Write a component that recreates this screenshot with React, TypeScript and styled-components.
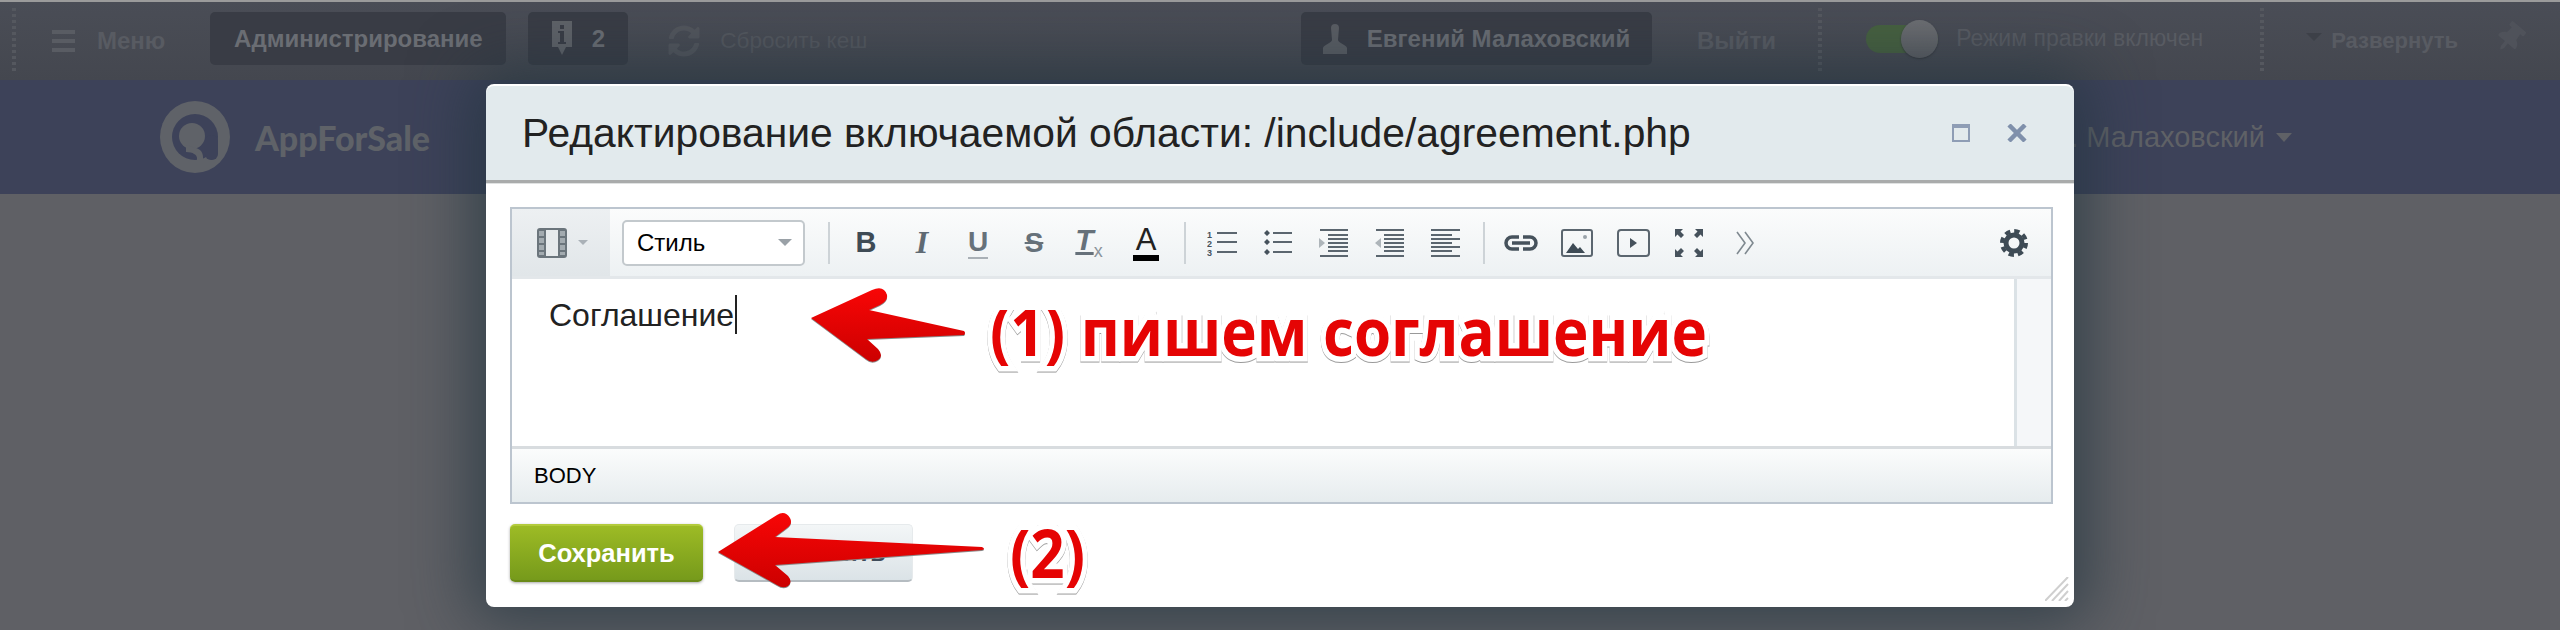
import styled, { createGlobalStyle } from 'styled-components'
import { FaSyncAlt, FaThumbtack } from 'react-icons/fa'

const GlobalStyle = createGlobalStyle`
  html, body {
    margin: 0;
    width: 2560px;
    height: 630px;
    overflow: hidden;
    background: #5f6065;
    font-family: 'Liberation Sans', Arial, sans-serif;
  }
`

const Page = styled.div`
  position: relative;
  width: 2560px;
  height: 630px;
  overflow: hidden;
`

const TopStrip = styled.div`
  height: 2px;
  background: #9b9b9b;
`

const Panel = styled.div`
  height: 78px;
  display: flex;
  align-items: center;
  justify-content: space-between;
  background: linear-gradient(#4a4d56, #44474f);
`

const PanelGroup = styled.div<{ $pr?: number }>`
  display: flex;
  align-items: center;
  padding-right: ${(p) => p.$pr || 0}px;
`

const Grip = styled.div<{ $ml: number }>`
  width: 4px;
  height: 66px;
  margin-left: ${(p) => p.$ml}px;
  background: repeating-linear-gradient(#55585f 0 3px, transparent 3px 6px);
`

const PanelButton = styled.div<{ $w: number; $ml: number }>`
  width: ${(p) => p.$w}px;
  height: 53px;
  margin-left: ${(p) => p.$ml}px;
  margin-top: -5px;
  display: flex;
  align-items: center;
  justify-content: center;
  gap: 20px;
  border-radius: 5px;
  background: #393c45;
  color: #6a6d73;
  font-size: 24px;
  font-weight: bold;
  white-space: nowrap;
`

const PanelText = styled.span<{ $ml: number; $size: number; $bold?: boolean; $color?: string; $up?: number }>`
  margin-left: ${(p) => p.$ml}px;
  margin-top: ${(p) => p.$up || 0}px;
  font-size: ${(p) => p.$size}px;
  font-weight: ${(p) => (p.$bold ? 'bold' : 'normal')};
  color: ${(p) => p.$color || '#585b62'};
  white-space: nowrap;
`

const PanelIcon = styled.span<{ $ml: number; $color?: string; $size?: number; $up?: number }>`
  display: flex;
  margin-left: ${(p) => p.$ml}px;
  margin-top: ${(p) => p.$up || 0}px;
  color: ${(p) => p.$color || '#595c63'};
  font-size: ${(p) => p.$size || 24}px;
`

const Toggle = styled.div`
  position: relative;
  width: 72px;
  height: 28px;
  margin-left: 44px;
  margin-top: -4px;
  border-radius: 14px;
  background: #46603f;
`

const ToggleKnob = styled.div`
  position: absolute;
  right: 0;
  top: -5px;
  width: 37px;
  height: 38px;
  border-radius: 50%;
  background: linear-gradient(#6c6e72, #5b5d62);
  box-shadow: 0 1px 2px #33353b;
`

const SiteHeader = styled.header`
  height: 114px;
  display: flex;
  align-items: center;
  justify-content: space-between;
  background: #3d4259;
`

const Logo = styled.div`
  display: flex;
  align-items: center;
  gap: 25px;
  margin-left: 160px;
`

const LogoText = styled.span`
  font-family: Lato, sans-serif;
  font-weight: 900;
  font-size: 34px;
  color: #5f6268;
`

const HeaderUser = styled.div`
  display: flex;
  align-items: center;
  gap: 11px;
  margin-right: 268px;
  font-size: 29px;
  color: #5f6166;
`

const HeaderCaret = styled.span`
  width: 0;
  height: 0;
  border-left: 8px solid transparent;
  border-right: 8px solid transparent;
  border-top: 9px solid #5f6166;
`

const Dialog = styled.div`
  position: absolute;
  left: 486px;
  top: 84px;
  width: 1588px;
  height: 523px;
  display: flex;
  flex-direction: column;
  box-sizing: border-box;
  border-radius: 8px;
  background: #fff;
  box-shadow: 0 0 62px 14px rgba(34, 52, 64, 0.72);
`

const DialogHead = styled.div`
  height: 94px;
  margin-top: 2px;
  display: flex;
  align-items: center;
  justify-content: space-between;
  padding: 0 47px 0 36px;
  background: #e2eaed;
  border-radius: 8px 8px 0 0;
  border-bottom: 3px solid #a9abab;
  box-shadow: 0 1px 0 #e0e2e2;
`

const DialogTitle = styled.h1`
  margin: 0;
  font-size: 40.8px;
  font-weight: normal;
  color: #222;
  white-space: nowrap;
`

const HeadIcons = styled.div`
  display: flex;
  align-items: center;
  gap: 37px;
`

const MaxIcon = styled.span`
  box-sizing: border-box;
  width: 18px;
  height: 18px;
  border: 2px solid #8e9db5;
  border-top-width: 4px;
`

const DialogBody = styled.div`
  padding: 24px 21px 0 24px;
`

const Editor = styled.div`
  height: 297px;
  box-sizing: border-box;
  display: flex;
  flex-direction: column;
  border: 2px solid #bcc5cf;
`

const Toolbar = styled.div`
  height: 67px;
  flex-shrink: 0;
  display: flex;
  align-items: center;
  background: linear-gradient(#fbfcfc, #edf1f3);
  border-bottom: 3px solid #e3e7ea;
`

const ModeTab = styled.div`
  width: 98px;
  height: 100%;
  flex-shrink: 0;
  display: flex;
  align-items: center;
  gap: 11px;
  padding-left: 25px;
  box-sizing: border-box;
  background: linear-gradient(#edf0f2, #e1e6e9);
`

const SmallCaret = styled.span<{ $w?: number; $c?: string }>`
  width: 0;
  height: 0;
  border-left: ${(p) => p.$w || 5}px solid transparent;
  border-right: ${(p) => p.$w || 5}px solid transparent;
  border-top: ${(p) => p.$w || 5}px solid ${(p) => p.$c || '#aab1b7'};
`

const StyleSelect = styled.div`
  width: 183px;
  height: 46px;
  margin-left: 12px;
  box-sizing: border-box;
  display: flex;
  align-items: center;
  justify-content: space-between;
  padding: 0 11px 0 13px;
  border: 2px solid #c3c9cd;
  border-radius: 5px;
  background: #fff;
  font-size: 24px;
  color: #000;
`

const Divider = styled.span<{ $ml: number }>`
  width: 2px;
  height: 42px;
  margin-left: ${(p) => p.$ml}px;
  margin-right: 8px;
  flex-shrink: 0;
  background: #cdd3d7;
`

const Tool = styled.span`
  position: relative;
  width: 56px;
  height: 40px;
  flex-shrink: 0;
  display: flex;
  align-items: center;
  justify-content: center;
  color: #46525c;
`

const GlyphBold = styled.b`
  font-size: 29px;
  color: #3e4b55;
`

const GlyphItalic = styled.i`
  font-family: 'Liberation Serif', serif;
  font-weight: bold;
  font-size: 32px;
  color: #5f6a73;
`

const GlyphUnder = styled.span`
  font-size: 28px;
  font-weight: bold;
  color: #66717a;
  border-bottom: 2px solid #a9b0b6;
  line-height: 30px;
`

const GlyphStrike = styled.span`
  font-size: 28px;
  font-weight: bold;
  color: #66717a;
  text-decoration: line-through;
`

const GlyphClear = styled.span`
  font-size: 30px;
  font-style: italic;
  font-weight: bold;
  color: #66717a;
  margin-left: -2px;
  text-decoration: underline;
`

const GlyphSub = styled.sub`
  display: inline-block;
  font-size: 18px;
  font-style: normal;
  font-weight: normal;
  color: #8a939a;
`

const GlyphColor = styled.span`
  font-size: 31px;
  line-height: 30px;
  color: #222;
  border-bottom: 6px solid #000;
  padding: 0 3px;
`

const ToolSpacer = styled.span`
  flex: 1;
`

const GearSlot = styled.span`
  display: flex;
  margin-right: 23px;
`

const EditArea = styled.div`
  flex: 1;
  display: flex;
  min-height: 0;
`

const EditText = styled.div`
  flex: 1;
  padding: 16px 0 0 37px;
  display: flex;
  align-items: flex-start;
  font-size: 32px;
  line-height: 40px;
  color: #222;
`

const Cursor = styled.span`
  width: 2px;
  height: 39px;
  margin-left: 1px;
  background: #222;
`

const ScrollTrack = styled.div`
  width: 34px;
  background: #f5f7f9;
  border-left: 3px solid #dbe2e6;
`

const StatusBar = styled.div`
  height: 53px;
  flex-shrink: 0;
  display: flex;
  align-items: center;
  padding-left: 22px;
  border-top: 3px solid #d8dcdf;
  background: linear-gradient(#fbfcfc, #e6ecee);
  font-size: 22px;
  color: #000;
`

const Buttons = styled.div`
  display: flex;
  gap: 31px;
  margin-top: 20px;
`

const SaveButton = styled.div`
  width: 193px;
  height: 58px;
  display: flex;
  align-items: center;
  justify-content: center;
  border-radius: 5px;
  background: linear-gradient(#9dbb25, #769a1b);
  border-top: 2px solid #b3cb3c;
  border-bottom: 2px solid #6a8a18;
  box-sizing: border-box;
  box-shadow: 0 1px 3px rgba(0, 0, 0, 0.35);
  color: #fff;
  font-size: 25.5px;
  font-weight: bold;
`

const CancelButton = styled.div`
  width: 179px;
  height: 58px;
  display: flex;
  align-items: center;
  justify-content: center;
  box-sizing: border-box;
  border-radius: 5px;
  border: 1px solid #e6eaec;
  border-bottom: 2px solid #b5bcc1;
  background: linear-gradient(#f3f6f7, #dbe3e7);
  color: #3f4c5a;
  font-size: 25.5px;
  font-weight: bold;
`

const ResizeGrip = styled.svg`
  position: absolute;
  right: 5px;
  bottom: 6px;
`

const Arrow = styled.svg<{ $x: number; $y: number }>`
  position: absolute;
  left: ${(p) => p.$x}px;
  top: ${(p) => p.$y}px;
  filter: drop-shadow(0 1px 0 #8a8a8a);
`

// the notes are cut flat at the top in the picture, hence the clip
const Note = styled.div<{ $x: number; $y: number; $clip: number }>`
  position: absolute;
  left: ${(p) => p.$x}px;
  top: ${(p) => p.$y}px;
  font-family: 'Open Sans', 'Noto Sans', sans-serif;
  font-weight: 700;
  font-size: 66px;
  line-height: 84px;
  color: #e50404;
  white-space: nowrap;
  -webkit-text-stroke: 11px #fff;
  paint-order: stroke fill;
  transform: scaleX(0.91);
  transform-origin: left center;
  filter: drop-shadow(0 1px 0 #999);
  clip-path: inset(${(p) => p.$clip}px -20px -20px -20px);
`

const FilmIcon = () => (
  <svg width="30" height="30" viewBox="0 0 30 30">
    <rect x="0" y="0" width="30" height="30" rx="3" fill="#6b757c" />
    <rect x="9" y="2" width="12" height="26" fill="#e6eaec" />
    <path d="M2 3h5v5H2zM2 10h5v5H2zM2 17h5v5H2zM2 24h5v3H2zM23 3h5v5h-5zM23 10h5v5h-5zM23 17h5v5h-5zM23 24h5v3h-5z" fill="#a3abb0" />
  </svg>
)

const OlIcon = () => (
  <svg width="30" height="28" viewBox="0 0 30 28">
    <text x="0" y="9" fontSize="9" fontWeight="bold" fill="#46525c" fontFamily="Liberation Sans">1</text>
    <text x="0" y="18" fontSize="9" fontWeight="bold" fill="#46525c" fontFamily="Liberation Sans">2</text>
    <text x="0" y="27" fontSize="9" fontWeight="bold" fill="#46525c" fontFamily="Liberation Sans">3</text>
    <path d="M10 4h20M10 13h20M10 23h20" stroke="#5b666f" strokeWidth="2" />
  </svg>
)

const UlIcon = () => (
  <svg width="28" height="28" viewBox="0 0 28 28">
    <path d="M3 1l3 3-3 3-3-3zM3 10l3 3-3 3-3-3zM3 20l3 3-3 3-3-3z" fill="#46525c" />
    <path d="M9 4h19M9 13h19M9 23h19" stroke="#5b666f" strokeWidth="2" />
  </svg>
)

const IndentIcon = ({ out }: { out?: boolean }) => (
  <svg width="30" height="28" viewBox="0 0 30 28">
    <path d="M1 1h28M9 6h20M9 10h20M9 14h20M9 18h20M9 22h20M1 27h28" stroke="#5b666f" strokeWidth="2" />
    <path d={out ? 'M6 9v10l-6-5z' : 'M0 9v10l6-5z'} fill="#aeb5ba" />
  </svg>
)

const AlignIcon = () => (
  <svg width="30" height="28" viewBox="0 0 30 28">
    <path d="M0 1h29M0 6h21M0 10h29M0 14h21M0 18h29M0 22h21M0 27h29" stroke="#5b666f" strokeWidth="2" />
  </svg>
)

const LinkIcon = () => (
  <svg width="36" height="18" viewBox="0 0 36 18" fill="none" stroke="#46525c" strokeWidth="3.5">
    <path d="M16 3H9a6 6 0 0 0 0 12h7M20 3h7a6 6 0 0 1 0 12h-7M9 9h18" />
  </svg>
)

const ImageIcon = () => (
  <svg width="32" height="28" viewBox="0 0 32 28">
    <rect x="1" y="1" width="30" height="26" rx="2" fill="none" stroke="#5b666f" strokeWidth="2" />
    <path d="M5 24l7-10 5 6 2-2 5 6z" fill="#3e4b55" />
    <circle cx="24" cy="8" r="2" fill="#9aa3aa" />
  </svg>
)

const VideoIcon = () => (
  <svg width="33" height="28" viewBox="0 0 33 28">
    <rect x="1" y="1" width="31" height="26" rx="3" fill="none" stroke="#5b666f" strokeWidth="2" />
    <path d="M13 9v10l7-5z" fill="#46525c" />
  </svg>
)

const FullIcon = () => (
  <svg width="28" height="28" viewBox="0 0 28 28" fill="#46525c">
    <path d="M0 0h8L5.5 2.5 9 6 6 9 2.5 5.5 0 8zM28 0h-8l2.5 2.5L19 6l3 3 3.5-3.5L28 8zM0 28h8l-2.500-2.500L9 22l-3-3-3.500 3.500L0 20zM28 28h-8l2.500-2.500L19 22l3-3 3.500 3.500L28 20z" />
  </svg>
)

const MoreIcon = () => (
  <svg width="19" height="24" viewBox="0 0 19 24" fill="none" stroke="#7f8990" strokeWidth="1.6">
    <path d="M1 1l8 11-8 11M9 1l8 11-8 11" />
  </svg>
)

const GearIcon = () => (
  <svg width="28" height="30" viewBox="0 0 28 30" fill="none" stroke="#3e4b55">
    <circle cx="14" cy="15" r="8" strokeWidth="5" />
    <circle cx="14" cy="15" r="12" strokeWidth="4" strokeDasharray="5.4 4" />
  </svg>
)

const LogoMark = () => (
  <svg width="70" height="72" viewBox="0 0 70 72">
    <ellipse cx="35" cy="36" rx="35" ry="36" fill="#5f6268" />
    <circle cx="35" cy="36" r="23" fill="#3d4259" />
    <rect x="45" y="34" width="13" height="25" rx="6" fill="#3d4259" />
    <circle cx="32" cy="35" r="13" fill="#5f6268" />
    <path d="M26 44l10 3c4 1 7 4 7 9v7h-6v-6c0-3-4-6-11-6z" fill="#5f6268" />
  </svg>
)

const BurgerIcon = () => (
  <svg width="23" height="22" viewBox="0 0 23 22" fill="#595c63">
    <rect y="0" width="23" height="4" />
    <rect y="9" width="23" height="4" />
    <rect y="18" width="23" height="4" />
  </svg>
)

const InfoIcon = () => (
  <svg width="20" height="36" viewBox="0 0 20 36">
    <path d="M0 0h20v26h-6l-4 8-4-8H0z" fill="#5f6268" />
    <rect x="8" y="4" width="4" height="4" fill="#393c45" />
    <path d="M6 10h6v11h2v2H6v-2h2v-9H6z" fill="#393c45" />
  </svg>
)

const UserIcon = () => (
  <svg width="24" height="30" viewBox="0 0 24 30" fill="#5a5d63">
    <path d="M8 4a4 4 0 0 1 8 0l-1 12c0 3 9 5 9 8v6H0v-6c0-3 9-5 9-8z" />
  </svg>
)

const Arrow1Path = 'M11 33L72 5Q84 0 87 10Q88 16 80 20L69 25L164 46Q166 48 164 50L67 54L78 64Q84 71 78 75Q72 79 66 74Z'
const Arrow2Path = 'M13 42L72 5Q80 0 85 8Q88 14 82 18L70 27L277 37Q281 39 277 40L70 55L83 66Q88 72 83 76Q78 79 72 75Z'

export default function App() {
  return (
    <Page>
      <GlobalStyle />
      <TopStrip />
      <Panel>
        <PanelGroup>
          <Grip $ml={12} />
          <PanelIcon $ml={36}>
            <BurgerIcon />
          </PanelIcon>
          <PanelText $ml={22} $size={24} $bold>
            Меню
          </PanelText>
          <PanelButton $w={296} $ml={45}>
            Администрирование
          </PanelButton>
          <PanelButton $w={100} $ml={22}>
            <InfoIcon />
            <span>2</span>
          </PanelButton>
          <PanelIcon $ml={40} $size={32} $color="#52555c">
            <FaSyncAlt />
          </PanelIcon>
          <PanelText $ml={20} $size={22.5} $color="#54575e">
            Сбросить кеш
          </PanelText>
        </PanelGroup>
        <PanelGroup $pr={35}>
          <PanelButton $w={351} $ml={0}>
            <UserIcon />
            <span>Евгений Малаховский</span>
          </PanelButton>
          <PanelText $ml={45} $size={24} $bold>
            Выйти
          </PanelText>
          <Grip $ml={42} />
          <Toggle>
            <ToggleKnob />
          </Toggle>
          <PanelText $ml={18} $size={23} $up={-6}>
            Режим правки включен
          </PanelText>
          <Grip $ml={57} />
          <PanelText $ml={42} $size={0}>
            <SmallCaret $w={8} $c="#3d4048" />
          </PanelText>
          <PanelText $ml={9} $size={22} $bold>
            Развернуть
          </PanelText>
          <PanelIcon $ml={37} $size={30} $up={-6} $color="#4f525a">
            <FaThumbtack style={{ transform: 'rotate(40deg)' }} />
          </PanelIcon>
        </PanelGroup>
      </Panel>
      <SiteHeader>
        <Logo>
          <LogoMark />
          <LogoText>AppForSale</LogoText>
        </Logo>
        <HeaderUser>
          Е. Малаховский
          <HeaderCaret />
        </HeaderUser>
      </SiteHeader>

      <Dialog>
        <DialogHead>
          <DialogTitle>Редактирование включаемой области: /include/agreement.php</DialogTitle>
          <HeadIcons>
            <MaxIcon />
            <svg width="20" height="18" viewBox="0 0 20 18" stroke="#7f90ab" strokeWidth="4.5">
              <path d="M2 1l16 16M18 1L2 17" />
            </svg>
          </HeadIcons>
        </DialogHead>
        <DialogBody>
          <Editor>
            <Toolbar>
              <ModeTab>
                <FilmIcon />
                <SmallCaret />
              </ModeTab>
              <StyleSelect>
                Стиль
                <SmallCaret $w={7} $c="#9aa1a7" />
              </StyleSelect>
              <Divider $ml={23} />
              <Tool>
                <GlyphBold>B</GlyphBold>
              </Tool>
              <Tool>
                <GlyphItalic>I</GlyphItalic>
              </Tool>
              <Tool>
                <GlyphUnder>U</GlyphUnder>
              </Tool>
              <Tool>
                <GlyphStrike>S</GlyphStrike>
              </Tool>
              <Tool>
                <GlyphClear>
                  T<GlyphSub>x</GlyphSub>
                </GlyphClear>
              </Tool>
              <Tool>
                <GlyphColor>A</GlyphColor>
              </Tool>
              <Divider $ml={10} />
              <Tool>
                <OlIcon />
              </Tool>
              <Tool>
                <UlIcon />
              </Tool>
              <Tool>
                <IndentIcon />
              </Tool>
              <Tool>
                <IndentIcon out />
              </Tool>
              <Tool>
                <AlignIcon />
              </Tool>
              <Divider $ml={9} />
              <Tool>
                <LinkIcon />
              </Tool>
              <Tool>
                <ImageIcon />
              </Tool>
              <Tool>
                <VideoIcon />
              </Tool>
              <Tool>
                <FullIcon />
              </Tool>
              <Tool>
                <MoreIcon />
              </Tool>
              <ToolSpacer />
              <GearSlot>
                <GearIcon />
              </GearSlot>
            </Toolbar>
            <EditArea>
              <EditText>
                Соглашение
                <Cursor />
              </EditText>
              <ScrollTrack />
            </EditArea>
            <StatusBar>BODY</StatusBar>
          </Editor>
          <Buttons>
            <SaveButton>Сохранить</SaveButton>
            <CancelButton>Отменить</CancelButton>
          </Buttons>
        </DialogBody>
        <ResizeGrip width="24" height="24" viewBox="0 0 24 24" stroke="#cfcfcf" strokeWidth="2">
          <path d="M0 24L23 0M7 24L23 7M14 24L23 14M20 24L23 21" />
        </ResizeGrip>
      </Dialog>

      <Arrow $x={800} $y={285} width="175" height="85" viewBox="0 0 175 85">
        <defs>
          <linearGradient id="arrowRed" x1="0" y1="0" x2="0" y2="1">
            <stop offset="0" stopColor="#f80606" />
            <stop offset="1" stopColor="#cc0000" />
          </linearGradient>
        </defs>
        <path d={Arrow1Path} fill="url(#arrowRed)" />
      </Arrow>
      <Note $x={990} $y={288} $clip={22}>
        (1) пишем соглашение
      </Note>
      <Arrow $x={705} $y={510} width="290" height="85" viewBox="0 0 290 85">
        <path d={Arrow2Path} fill="url(#arrowRed)" />
      </Arrow>
      <Note $x={1010} $y={510} $clip={15}>
        (2)
      </Note>
    </Page>
  )
}
